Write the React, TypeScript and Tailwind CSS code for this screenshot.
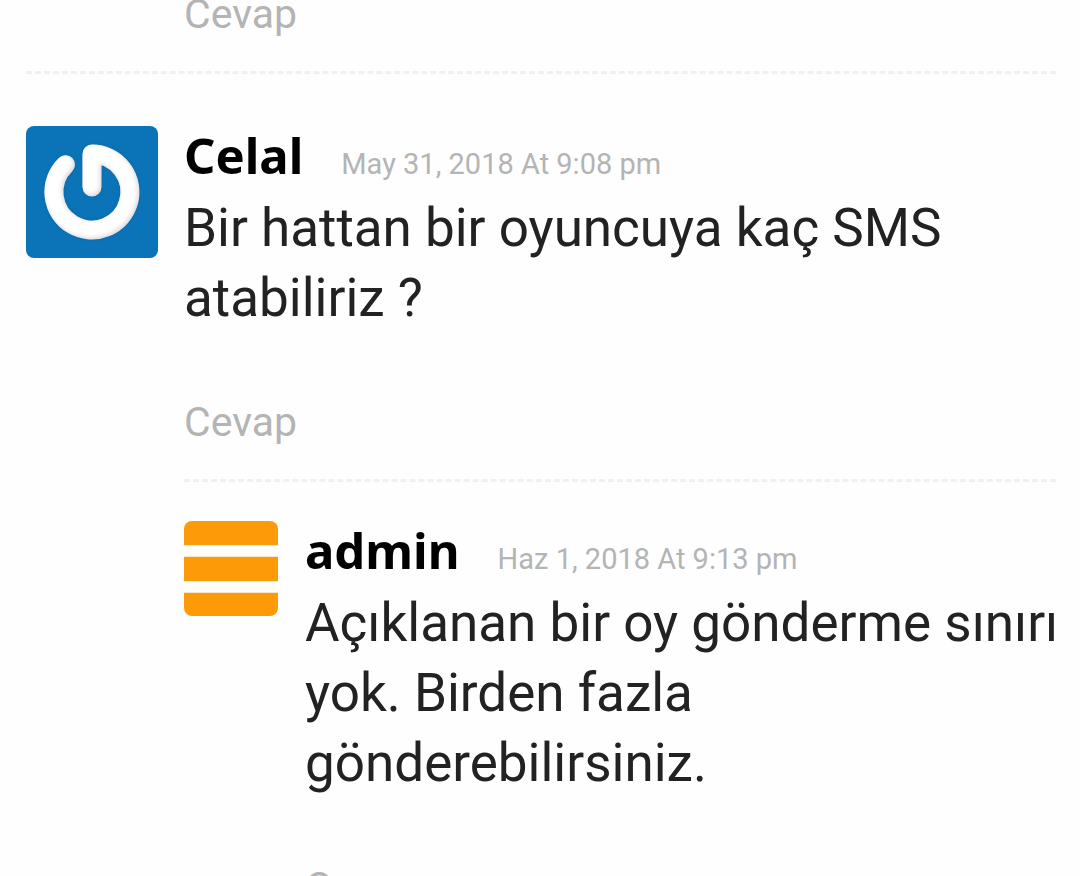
import React from 'react';

interface CommentProps {
  author: string;
  date: string;
  text: string;
  avatar: React.ReactNode;
  nested?: boolean;
}

const POWER_PATH = 'M66 61V28A38 38 0 1 1 39.5 38.7';

const PowerAvatar: React.FC = () => (
  <svg
    viewBox="0 0 132 132"
    role="img"
    aria-label="Celal"
    className="size-[132px] flex-shrink-0 rounded-lg bg-[#0b74b8]"
    fill="none"
    strokeLinecap="round"
    strokeLinejoin="round"
  >
    <defs>
      <filter id="soft" x="-20%" y="-20%" width="140%" height="140%">
        <feGaussianBlur stdDeviation="2" />
      </filter>
      <mask id="ring" maskUnits="userSpaceOnUse" x="0" y="0" width="132" height="132">
        <path d={POWER_PATH} stroke="#fff" strokeWidth="19" />
      </mask>
    </defs>
    {/* Shadow under the ring */}
    <path d={POWER_PATH} stroke="#06598f" strokeOpacity="0.4" strokeWidth="19" filter="url(#soft)" />
    <path d={POWER_PATH} stroke="#dcdcdc" strokeWidth="19" />
    {/* Highlight, kept inside the ring */}
    <g mask="url(#ring)">
      <path d={POWER_PATH} stroke="#fff" strokeWidth="18" filter="url(#soft)" transform="translate(-1.5 -1.5)" />
    </g>
  </svg>
);

const StripesAvatar: React.FC = () => (
  <svg
    viewBox="0 0 94 95"
    role="img"
    aria-label="admin"
    className="h-[95px] w-[94px] flex-shrink-0 rounded-lg bg-[#fffffa]"
  >
    <path fill="#fd9a07" d="M0 0h94v24H0zM0 36h94v24H0zM0 72h94v23H0z" />
    <path stroke="#e0a850" strokeOpacity="0.6" d="M0 24h94M0 36h94M0 60h94M0 72h94" />
  </svg>
);

const ReplyLink: React.FC = () => (
  <a href="#respond" className="text-[41px] leading-[48px] text-[#b4b4b4]">
    Cevap
  </a>
);

const Comment: React.FC<CommentProps> = ({ author, date, text, avatar, nested }) => (
  <article className={`flex ${nested ? 'gap-[27px]' : 'gap-[26px]'}`}>
    {avatar}
    <div className="min-w-0 flex-1">
      <header className="mb-2 flex items-baseline gap-[38px]">
        <h3 className="font-['Noto_Sans',sans-serif] text-[49px] leading-[59px] font-bold text-black">{author}</h3>
        <time className="text-[29px] leading-8 text-[#b4b4b4]">{date}</time>
      </header>
      <p className="-mr-2 text-[53px] leading-[70px] text-[#222222]">{text}</p>
      <div className="mt-[65px] flex">
        <ReplyLink />
      </div>
    </div>
  </article>
);

const Divider: React.FC = () => (
  <hr className="mt-[33px] border-t-3 border-dashed border-[#f0f0f0]" />
);

export default function App() {
  return (
    <main className="min-h-screen overflow-hidden bg-[#fefefe] pr-6 pl-[26px] font-[Roboto,sans-serif]">
      <div className="-mt-[10px] flex pl-[158px]">
        <ReplyLink />
      </div>
      <Divider />

      <section className="pt-[52px]">
        <Comment
          author="Celal"
          date="May 31, 2018 At 9:08 pm"
          text="Bir hattan bir oyuncuya kaç SMS atabiliriz ?"
          avatar={<PowerAvatar />}
        />
        <div className="pl-[158px]">
          <Divider />
          <div className="pt-[39px]">
            <Comment
              nested
              author="admin"
              date="Haz 1, 2018 At 9:13 pm"
              text="Açıklanan bir oy gönderme sınırı yok. Birden fazla gönderebilirsiniz."
              avatar={<StripesAvatar />}
            />
          </div>
        </div>
      </section>
    </main>
  );
}
